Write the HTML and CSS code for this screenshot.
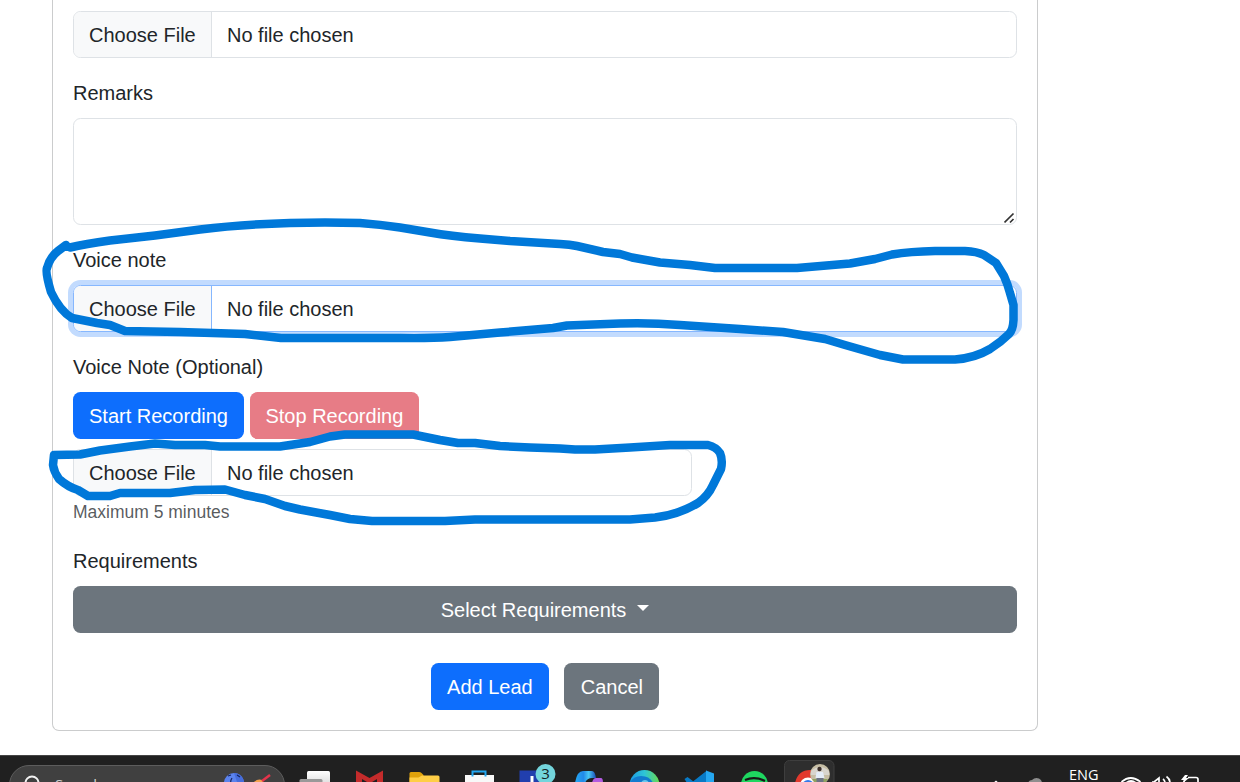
FILE: index.html
```html
<!DOCTYPE html>
<html lang="en">
<head>
<meta charset="utf-8">
<title>Add Lead</title>
<link rel="stylesheet" href="styles.css">
</head>
<body>
<main class="page">
  <form class="card">
    <div class="file"><span class="file-btn">Choose File</span><span class="file-name">No file chosen</span></div>
    <div class="group">
      <label class="label">Remarks</label>
      <div class="textarea">
        <svg class="grip" width="12" height="12" viewBox="0 0 12 12"><path d="M.5 10.500 9.500 1.500M6 10.500 9.500 7" fill="none" stroke="#333" stroke-width="1.700"/></svg>
      </div>
    </div>
    <div class="group">
      <label class="label">Voice note</label>
      <div class="file focused"><span class="file-btn">Choose File</span><span class="file-name">No file chosen</span></div>
    </div>
    <div class="group">
      <label class="label">Voice Note (Optional)</label>
      <div class="record">
        <button type="button" class="btn primary">Start Recording</button>
        <button type="button" class="btn danger">Stop Recording</button>
      </div>
      <div class="file narrow"><span class="file-btn">Choose File</span><span class="file-name">No file chosen</span></div>
      <small class="hint">Maximum 5 minutes</small>
    </div>
    <div class="group">
      <label class="label">Requirements</label>
      <button type="button" class="btn secondary wide">Select Requirements<span class="caret"></span></button>
    </div>
    <div class="actions">
      <button type="button" class="btn primary">Add Lead</button>
      <button type="button" class="btn secondary">Cancel</button>
    </div>
  </form>
</main>

<footer class="taskbar">
  <div class="search">
    <svg class="lens" width="18" height="18" viewBox="0 0 18 18"><circle cx="8" cy="8" r="6.500" fill="none" stroke="#f2f2f2" stroke-width="2"/></svg>
    <span class="search-text">Search</span>
    <svg class="doodle" width="50" height="20" viewBox="0 0 50 20">
      <circle cx="10" cy="11" r="10" fill="#5b83ee"/><path d="M10 1a10 10 0 0 1 6 18z" fill="#466ddc"/><path d="M4 4l3-1M8 6q-2 3-1 6M13 3l3 2" stroke="#17245a" stroke-width="1.200" fill="none"/>
      <path d="M28 12q5-6 10-4l3 4-4 7h-9z" fill="#f5a34e"/><path d="M38 9l8-6" stroke="#e5344b" stroke-width="2.500"/>
    </svg>
  </div>
  <div class="apps">
    <svg width="55" height="27" viewBox="0 0 55 27"><defs><linearGradient id="tv" x2="0" y2="1"><stop stop-color="#fff"/><stop offset="1" stop-color="#ccc"/></linearGradient></defs><rect x="20" y="16" width="23" height="20" rx="1.500" fill="url(#tv)"/><path d="M12.500 27v-1.500q0-1.500 1.500-1.500h20q1.500 0 1.500 1.500v1.500z" fill="#999"/></svg>
    <svg width="55" height="27" viewBox="0 0 55 27"><path d="M14 15.500 27.500 23 41 15.500V30h-6v-6l-7.500 4.500L20 24v6h-6z" fill="#c42b2b"/></svg>
    <svg width="55" height="27" viewBox="0 0 55 27"><path d="M12.500 28V18.500q0-1.500 1.500-1.500h8q1.500 0 2.500 1l2 2v8z" fill="#e0a20b"/><path d="M12.500 28v-5.500h9l3.500-2h16q1.500 0 1.500 1.500v6z" fill="#ffce46"/></svg>
    <svg width="55" height="27" viewBox="0 0 55 27"><path d="M13 28v-8h29v8z" fill="#f8f8f8"/><path d="M20.500 21.500v-5h13v5" fill="none" stroke="#22a7f2" stroke-width="2"/></svg>
    <svg width="55" height="27" viewBox="0 0 55 27"><path d="M12.500 15.500h27V28h-27z" fill="#213fae"/><path d="M23.500 21h3v7h-3z" fill="#fff"/><circle cx="38.500" cy="19" r="10" fill="#73d5dc"/><text x="38.500" y="24" class="badge-text">3</text></svg>
    <svg width="55" height="27" viewBox="0 0 55 27"><defs><linearGradient id="co"><stop stop-color="#24a9f3"/><stop offset=".4" stop-color="#2189e9"/><stop offset=".65" stop-color="#48c7f3"/><stop offset="1" stop-color="#184bb8"/></linearGradient></defs><path d="M13 28q2-12 8-12h9q3 0 4 7h-4q-5 0-7 5z" fill="url(#co)"/><path d="M30 28q1-5 4-5h5q2 0 2 5z" fill="#b25be0"/></svg>
    <svg width="55" height="27" viewBox="0 0 55 27"><defs><linearGradient id="ed"><stop stop-color="#1b99e6"/><stop offset=".5" stop-color="#2ec4d6"/><stop offset="1" stop-color="#68dc4e"/></linearGradient></defs><circle cx="27.500" cy="30" r="15" fill="url(#ed)"/><path d="M13 27q4-6 11-6 9 0 12 7H13z" fill="#127bcf"/><path d="M24 28q1-3 4-3t4 3z" fill="#65c7ed"/></svg>
    <svg width="55" height="27" viewBox="0 0 55 27"><path d="M12.500 24l3-2 8 6H15zM19 28 35 15.500V28z" fill="#087ac6"/><path d="M34 15.500 42 18.500V28h-8z" fill="#25a7f0"/></svg>
    <svg width="55" height="27" viewBox="0 0 55 27"><circle cx="27.500" cy="29.500" r="13.500" fill="#1ed760"/><path d="M18 25q10-4 20 1" fill="none" stroke="#171717" stroke-width="2.200"/></svg>
    <svg width="55" height="27" viewBox="0 0 55 27"><rect x="2.500" y="5.500" width="49.500" height="32" rx="5" fill="#2e2e2e" stroke="#3e3e3e"/><path d="M13 28q3-13 15-13 7 0 12 7v6z" fill="#e2392d"/><circle cx="26" cy="30.500" r="8" fill="#fff"/><circle cx="26" cy="31" r="6" fill="#3479ea"/><circle cx="38" cy="19" r="10" fill="#c5bda4"/><path d="M29 16q9-8 18 0v4H29z" fill="#d8d5cd"/><path d="M30 24h16l-3 4H33z" fill="#8ea35f"/><circle cx="37.500" cy="14" r="2.200" fill="#3d302b"/><path d="M34.500 17h6.500l1.500 6h-9z" fill="#e4edf8"/><path d="M34.500 23h7v4h-7z" fill="#6c7484"/></svg>
  </div>
  <div class="tray">
    <svg class="tray-left" width="60" height="27" viewBox="0 0 60 27"><path d="M6 30l4-3.500 4 3.500" fill="none" stroke="#fff" stroke-width="1.500"/><path d="M42 28q1-3 4-3 3-3 7-1.500 3 1.500 3 4.500z" fill="#8e8e8e"/></svg>
    <span class="lang">ENG</span>
    <svg class="tray-right" width="84" height="27" viewBox="0 0 84 27"><g fill="none" stroke="#fff" stroke-width="1.700"><path d="M2.500 27q9-8 19 0M7 28q5-4 10 0"/><path d="M33 27h2l5-4v5M44 24q2 1.500 2 4M47.500 21.500q3.500 2.500 3.500 6.500"/><path d="M69 22.500h8q2 0 2 2V28M65 28v-2.500"/></g><path d="M66 20l-4 5h3l-1 3 6-5h-3l2-3z" fill="#fff"/></svg>
  </div>
</footer>

<svg class="ink" width="1240" height="782" viewBox="0 0 1240 782">
  <path d="M70 247.500Q85 244 110 240.500L155 235.500 200 229.500Q240 224.500 290 223 325 222 360 223 380 224.500 400 227.500L430 232.500Q450 236 480 238.500L510 241 560 244Q570 244.500 577 246L603 252 620 254 632 257.500 660 262.500 690 265 715 268H797L850 263.500 875 259 892 254.500Q910 251.500 935 251H965Q977 251.500 984 255L996 263 1004 276Q1008 285 1010 293L1013.500 305V320Q1013 330 1009 334 1001 342 990 349 975 358 955 359.500H903L880 355 845 345 825 339 783 332 740 329 680 325Q650 322.500 620 323.500L567 325.500 553 328 500 332.500 450 337Q430 338.500 400 338H281L245 334 180 332 125 331 110 325 97 323 72 318Q60 311 51 292 45 272 47 268 50 257 58 251L66 245"/>
  <path d="M54 455 80 454.500 100 450.500 130 446.500 155 443.500 175 445H205L220 446.500H280L310 442 330 436.500 345 434.500H413L440 440 458 443H475L500 446 530 447.500 560 448.500 575 449.500H595L630 447.500 670 445H708Q716 447 720 453 723 460 721 469L713 485Q708 496 698 503 678 515 655 517.500L630 519.500H475L445 521H372L350 519 330 515 300 509.500 285 506 265 499 245 495 225 489.500 195 490 170 493H120L110 496H88L78 490Q68 487 59 479 54 472 53 465Z"/>
</svg>
</body>
</html>
```

FILE: styles.css
```css
* { box-sizing: border-box; }

body {
  margin: 0;
  height: 782px;
  overflow: hidden;
  background: #fff;
  color: #212529;
  font: 20px/30px "Liberation Sans", Arial, sans-serif;
}

.page { height: 755px; padding-left: 52px; }

.card {
  width: 986px;
  height: 731px;
  padding: 11px 20px 20px;
  border: 1px solid #cbcccd;
  border-top: 0;
  border-radius: 0 0 7px 7px;
}

.group { margin-top: 20px; }
.label { display: block; margin-bottom: 10px; }

.file {
  display: flex;
  height: 47px;
  border: 1px solid #dee2e6;
  border-radius: 7.500px;
}
.file-btn {
  width: 138px;
  padding: 8px 0 0 15px;
  background: #f8f9fa;
  border-right: 1px solid #dee2e6;
  border-radius: 6.500px 0 0 6.500px;
}
.file-name { padding: 8px 15px 0; }
.focused { border-color: #86b7fe; box-shadow: 0 0 0 5px #c2dbfe; }
.focused .file-btn { border-color: #86b7fe; }
.narrow { width: 619px; margin-top: 10px; }

.textarea {
  display: flex;
  align-items: flex-end;
  justify-content: flex-end;
  height: 107px;
  border: 1px solid #dee2e6;
  border-radius: 7.500px;
}

.record { display: flex; gap: 6px; }

.btn {
  height: 47px;
  padding: 0 16px;
  border: 0;
  border-radius: 7.500px;
  color: #fff;
  font: inherit;
  white-space: nowrap;
}
.primary { background: #0d6efd; }
.danger { padding: 0 15.500px; background: #e77c86; }
.secondary { background: #6c757d; }
.wide { display: flex; justify-content: center; align-items: center; width: 100%; }

.caret {
  margin: -3px 0 0 11px;
  border: 6px solid transparent;
  border-top-color: #fff;
  border-bottom: 0;
}

.hint { display: block; height: 30px; padding-top: 1px; font-size: 17.500px; color: rgba(33, 37, 41, .75); }

.actions {
  display: flex;
  justify-content: center;
  gap: 15px;
  margin-top: 30px;
}
.actions .btn { padding: 0 16.500px; }

.taskbar {
  display: flex;
  height: 27px;
  overflow: hidden;
  background: #202020;
  border-top: 1px solid #454545;
}
.taskbar svg { display: block; flex: none; margin-top: -1px; }

.search {
  display: flex;
  flex: none;
  width: 276px;
  height: 40px;
  margin: 9px 0 0 9px;
  padding-left: 14px;
  background: #404040;
  border: 1px solid #5d5d5d;
  border-radius: 20px;
}
.taskbar .lens { margin-top: 9px; }
.search-text {
  width: 76px;
  margin: 8px 93px 0 13px;
  color: #d0d0d0;
  font: 15px/20px "Open Sans", sans-serif;
}
.taskbar .doodle { margin-top: 6px; }

.apps { display: flex; flex: none; margin-left: 1.500px; }
.badge-text { font: 15px "Open Sans", sans-serif; text-anchor: middle; fill: #152225; }

.tray { display: flex; flex: none; margin-left: 149px; }
.lang {
  flex: none;
  width: 73px;
  padding: 9px 0 0 23.500px;
  color: #fff;
  font: 14.500px/20px "Open Sans", sans-serif;
}

/* Pen strokes drawn over the form */
.ink {
  position: absolute;
  top: 0;
  left: 0;
  pointer-events: none;
}
.ink path {
  fill: none;
  stroke: #0078d9;
  stroke-width: 8.500px;
  stroke-linecap: round;
  stroke-linejoin: round;
}
```
